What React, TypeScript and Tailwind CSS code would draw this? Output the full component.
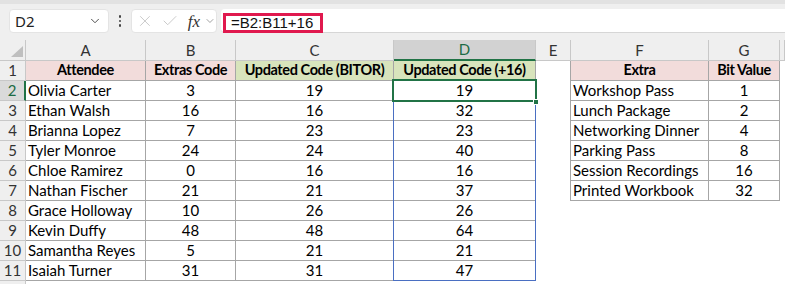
import { ChevronDown, X, Check } from 'lucide-react';

type Attendee = [string, number, number, number];

const attendees: Attendee[] = [
    ['Olivia Carter', 3, 19, 19],
    ['Ethan Walsh', 16, 16, 32],
    ['Brianna Lopez', 7, 23, 23],
    ['Tyler Monroe', 24, 24, 40],
    ['Chloe Ramirez', 0, 16, 16],
    ['Nathan Fischer', 21, 21, 37],
    ['Grace Holloway', 10, 26, 26],
    ['Kevin Duffy', 48, 48, 64],
    ['Samantha Reyes', 5, 21, 21],
    ['Isaiah Turner', 31, 31, 47],
];

const extras: [string, number][] = [
    ['Workshop Pass', 1],
    ['Lunch Package', 2],
    ['Networking Dinner', 4],
    ['Parking Pass', 8],
    ['Session Recordings', 16],
    ['Printed Workbook', 32],
];

const letters = ['A', 'B', 'C', 'D', 'E', 'F', 'G', ''];

type Cell = { text?: string | number; align?: 'left' | 'center'; bold?: boolean; fill?: string; boxed?: boolean };

// what sits in each cell of the sheet, row 1..12, column A..H
function cellAt(row: number, col: number): Cell {
    if (row === 1) {
        if (col === 0) return { text: 'Attendee', bold: true, align: 'center', fill: 'bg-[#f2dcdb]', boxed: true };
        if (col === 1) return { text: 'Extras Code', bold: true, align: 'center', fill: 'bg-[#f2dcdb]', boxed: true };
        if (col === 2) return { text: 'Updated Code (BITOR)', bold: true, align: 'center', fill: 'bg-[#d8e4bc]', boxed: true };
        if (col === 3) return { text: 'Updated Code (+16)', bold: true, align: 'center', fill: 'bg-[#d8e4bc]', boxed: true };
        if (col === 5) return { text: 'Extra', bold: true, align: 'center', fill: 'bg-[#f2dcdb]', boxed: true };
        if (col === 6) return { text: 'Bit Value', bold: true, align: 'center', fill: 'bg-[#f2dcdb]', boxed: true };
        return {};
    }
    const a = attendees[row - 2];
    if (a && col <= 3) {
        return { text: a[col], align: col === 0 ? 'left' : 'center', boxed: true };
    }
    const e = extras[row - 2];
    if (e && (col === 5 || col === 6)) {
        return { text: e[col - 5], align: col === 5 ? 'left' : 'center', boxed: true };
    }
    return {};
}

function SheetCell({ row, col }: { row: number; col: number }) {
    const cell = cellAt(row, col);
    const next = cellAt(row, col + 1);
    const right = cell.boxed || next.boxed;
    return (
        <div
            className={[
                'h-[20px] flex items-end pb-[1px] leading-[18px] overflow-hidden whitespace-nowrap text-black',
                cell.fill ?? 'bg-white',
                cell.boxed ? 'border-b border-[#a6a6a6]' : '',
                right ? 'border-r border-r-[#a6a6a6]' : '',
                cell.align === 'center' ? 'justify-center' : 'pl-[2px]',
                cell.bold ? 'font-bold text-[14.5px] tracking-[-0.4px]' : 'text-[15px]',
            ].join(' ')}
        >
            {cell.text}
        </div>
    );
}

function FormulaBar() {
    return (
        <div className="h-[40px] bg-[#efefef] relative">
            <div className="h-[4px] bg-[#e2e2e2]" />
            <div className="flex items-start pt-[5px]">
                {/* Name box */}
                <div className="ml-[9px] w-[100px] h-[24px] bg-white rounded-[4px] border border-[#e4e4e4] flex items-center pl-[5px] pr-[6px] justify-between">
                    <span className="text-[15px] text-[#222] font-['Noto_Sans',sans-serif]">D2</span>
                    <ChevronDown className="w-[14px] h-[14px] text-[#444]" strokeWidth={1.6} />
                </div>
                <div className="w-[22px] h-[24px] flex flex-col items-center justify-center gap-[2px]">
                    <span className="w-[2.5px] h-[2.5px] rounded-full bg-[#444]" />
                    <span className="w-[2.5px] h-[2.5px] rounded-full bg-[#444]" />
                    <span className="w-[2.5px] h-[2.5px] rounded-full bg-[#444]" />
                </div>
                {/* Cancel / Enter / fx */}
                <div className="w-[86px] h-[24px] bg-white rounded-[4px] border border-[#e4e4e4] flex items-center pl-[4px] gap-[4px]">
                    <X className="w-[18px] h-[18px] text-[#c4c4c4]" strokeWidth={1.2} />
                    <Check className="w-[18px] h-[18px] text-[#c4c4c4] ml-[3px]" strokeWidth={1.2} />
                    <span className="ml-[5px] text-[17px] italic font-['Liberation_Serif',serif] text-[#333] leading-none">fx</span>
                    <ChevronDown className="w-[12px] h-[12px] text-[#888]" strokeWidth={1.6} />
                </div>
                {/* Formula input */}
                <div className="ml-[4px] flex-1 h-[24px] bg-white rounded-l-[4px] border-b border-[#d6d6d6] relative">
                    <div className="absolute left-[2px] top-[4px] w-[100px] h-[20px] border-[3px] border-[#e0194e]" />
                    <span className="absolute left-[10px] top-[3px] text-[15px] text-[#111] font-['Liberation_Sans',sans-serif]">
                        =B2:B11+16
                    </span>
                </div>
            </div>
        </div>
    );
}

export default function App() {
    const rows = Array.from({ length: 12 }, (_, i) => i + 1);
    return (
        <div className="w-[785px] h-[284px] overflow-hidden bg-white font-['Lato',sans-serif]">
            <FormulaBar />
            <div className="relative">
                <div className="grid grid-cols-[26px_120px_90px_158px_142px_35px_138px_71px_1fr]">
                    {/* corner */}
                    <div className="h-[21px] bg-[#efefef] border-r border-b border-[#c8c8c8] relative">
                        <div className="absolute right-[2px] bottom-[3px] w-0 h-0 border-l-[12px] border-l-transparent border-b-[11px] border-b-[#bfbfbf]" />
                    </div>
                    {letters.map((l, i) => (
                        <div
                            key={l + i}
                            className={
                                l === 'D'
                                    ? 'h-[21px] bg-[#d2d2d2] border-r border-r-[#c8c8c8] border-b-2 border-b-[#217346] flex items-center justify-center text-[15px] text-[#1d6b44]'
                                    : 'h-[21px] bg-[#efefef] border-r border-b border-[#c8c8c8] flex items-center justify-center text-[15px] text-[#333]'
                            }
                        >
                            {l}
                        </div>
                    ))}
                    {rows.map((r) => (
                        <div key={r} className="contents">
                            <div
                                className={
                                    r === 2
                                        ? 'h-[20px] bg-[#dadada] border-r-2 border-r-[#217346] border-b border-b-[#c8c8c8] flex items-end pb-[1px] leading-[18px] justify-center text-[15px] text-[#1d6b44]'
                                        : 'h-[20px] bg-[#efefef] border-r border-b border-[#c8c8c8] flex items-end pb-[1px] leading-[18px] justify-center text-[15px] text-[#333] overflow-hidden'
                                }
                            >
                                {r < 12 ? r : ''}
                            </div>
                            {letters.map((_, c) => (
                                <SheetCell key={c} row={r} col={c} />
                            ))}
                        </div>
                    ))}
                </div>

                {/* spill range D2:D11 */}
                <div className="absolute left-[393px] top-[40px] w-[143px] h-[201px] border border-[#4a6fc2] pointer-events-none" />
                {/* active cell D2 */}
                <div className="absolute left-[392px] top-[39px] w-[145px] h-[23px] border-2 border-[#217346] pointer-events-none" />
                <div className="absolute left-[533px] top-[59px] w-[6px] h-[6px] bg-[#217346] border border-white pointer-events-none" />
            </div>
        </div>
    );
}
